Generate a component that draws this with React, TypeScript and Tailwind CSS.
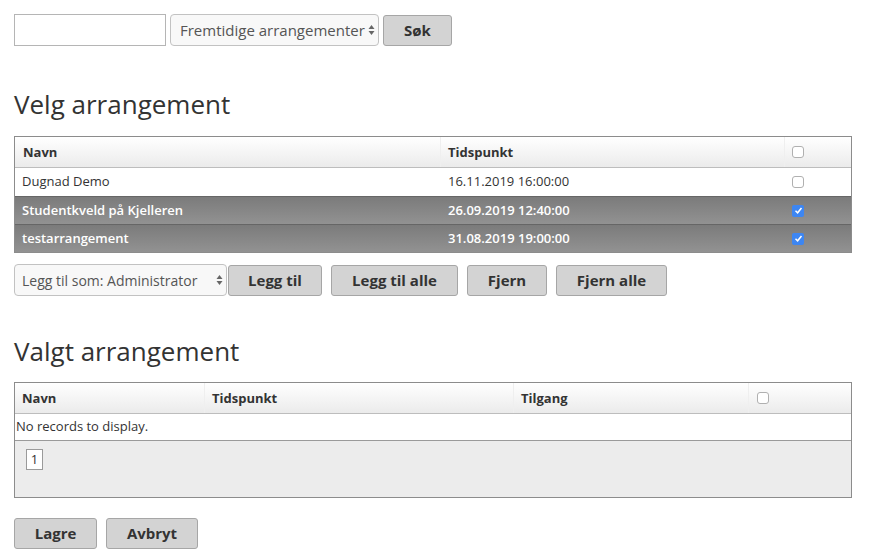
const font = { fontFamily: '"Open Sans", "Liberation Sans", sans-serif' };

const Arrows = () => (
  <svg width="7" height="12" viewBox="0 0 7 12" className="shrink-0">
    <path d="M3.5 1 L6.5 5 L0.5 5 Z" fill="#666" />
    <path d="M3.5 11 L6.5 7 L0.5 7 Z" fill="#666" />
  </svg>
);

const Checkbox = ({ checked }: { checked?: boolean }) =>
  checked ? (
    <span className="inline-flex h-[12px] w-[12px] items-center justify-center rounded-[2px] bg-[#3d86f2]">
      <svg width="9" height="9" viewBox="0 0 9 9">
        <path d="M1.5 4.8 L3.6 6.8 L7.5 2" stroke="#fff" strokeWidth="1.5" fill="none" />
      </svg>
    </span>
  ) : (
    <span className="inline-block h-[12px] w-[12px] rounded-[3px] border border-[#b0b0b0] bg-white" />
  );

const Button = ({ label, w }: { label: string; w: string }) => (
  <button
    className={`h-[31px] ${w} rounded-[3px] border border-[#a6a6a6] bg-[#d3d3d3] text-[15px] font-bold text-[#333]`}
  >
    {label}
  </button>
);

const events = [
  { name: 'Dugnad Demo', time: '16.11.2019 16:00:00', selected: false },
  { name: 'Studentkveld på Kjelleren', time: '26.09.2019 12:40:00', selected: true },
  { name: 'testarrangement', time: '31.08.2019 19:00:00', selected: true },
];

const headerBg = 'bg-gradient-to-b from-white to-[#ebebeb]';

export default function App() {
  return (
    <div className="min-h-screen bg-white pl-[14px] pt-[14px] text-[#333]" style={font}>
      {/* Søk */}
      <div className="flex items-center">
        <input className="h-[32px] w-[152px] border border-[#b5b5b5] bg-white" />
        <div className="ml-[4px] flex h-[32px] w-[209px] items-center justify-between rounded-[4px] border border-[#c2c2c2] bg-[#f8f8f8] pl-[9px] pr-[3px] text-[15px] text-[#555]">
          <span>Fremtidige arrangementer</span>
          <Arrows />
        </div>
        <div className="ml-[4px]">
          <Button label="Søk" w="w-[69px]" />
        </div>
      </div>

      <h2 className="mt-[41px] text-[26px] leading-[34px] font-normal text-[#333]">Velg arrangement</h2>

      <div className="mt-[15px] w-[838px] border border-[#8c8c8c]">
        <div className={`flex h-[31px] items-center border-b border-[#bdbdbd] text-[13px] font-bold ${headerBg}`}>
          <div className="w-[426px] border-r border-[#efefef] pl-[8px] leading-[30px]">Navn</div>
          <div className="w-[344px] border-r border-[#efefef] pl-[7px] leading-[30px]">Tidspunkt</div>
          <div className="flex flex-1 items-center pl-[7px]">
            <Checkbox />
          </div>
        </div>
        {events.map((e, i) => (
          <div
            key={e.name}
            className={`flex h-[28px] items-center text-[13px] ${i > 0 ? 'border-t border-[#666]' : ''} ${
              e.selected
                ? 'bg-gradient-to-b from-[#7b7b7b] to-[#929292] font-semibold text-white'
                : 'bg-white text-[#333]'
            }`}
          >
            <div className="w-[426px] pl-[7px]">{e.name}</div>
            <div className="w-[344px] pl-[7px]">{e.time}</div>
            <div className="flex flex-1 items-center pl-[7px]">
              <Checkbox checked={e.selected} />
            </div>
          </div>
        ))}
      </div>

      {/* Handlinger */}
      <div className="mt-[11px] flex items-center">
        <div className="flex h-[32px] w-[213px] items-center justify-between rounded-[4px] border border-[#c2c2c2] bg-[#f8f8f8] pl-[7px] pr-[3px] text-[14px] text-[#555]">
          <span>Legg til som: Administrator</span>
          <Arrows />
        </div>
        <div className="ml-[1px]">
          <Button label="Legg til" w="w-[94px]" />
        </div>
        <div className="ml-[9px]">
          <Button label="Legg til alle" w="w-[127px]" />
        </div>
        <div className="ml-[9px]">
          <Button label="Fjern" w="w-[80px]" />
        </div>
        <div className="ml-[9px]">
          <Button label="Fjern alle" w="w-[111px]" />
        </div>
      </div>

      <h2 className="mt-[38px] text-[26px] leading-[34px] font-normal text-[#333]">Valgt arrangement</h2>

      <div className="mt-[14px] w-[838px] border border-[#8c8c8c]">
        <div className={`flex h-[31px] items-center border-b border-[#bdbdbd] text-[13px] font-bold ${headerBg}`}>
          <div className="w-[190px] border-r border-[#efefef] pl-[7px] leading-[30px]">Navn</div>
          <div className="w-[309px] border-r border-[#efefef] pl-[7px] leading-[30px]">Tidspunkt</div>
          <div className="w-[235px] border-r border-[#efefef] pl-[7px] leading-[30px]">Tilgang</div>
          <div className="flex flex-1 items-center pl-[8px]">
            <Checkbox />
          </div>
        </div>
        <div className="flex h-[27px] items-center border-b border-[#9a9a9a] bg-white pl-[1px] text-[13px]">
          No records to display.
        </div>
        <div className="flex h-[56px] items-start bg-[#ececec] pl-[11px] pt-[8px]">
          <span className="flex h-[21px] w-[17px] items-center justify-center border border-[#9a9a9a] bg-white text-[13px]">
            1
          </span>
        </div>
      </div>

      <div className="mt-[20px] flex gap-[9px]">
        <Button label="Lagre" w="w-[83px]" />
        <Button label="Avbryt" w="w-[92px]" />
      </div>
    </div>
  );
}
